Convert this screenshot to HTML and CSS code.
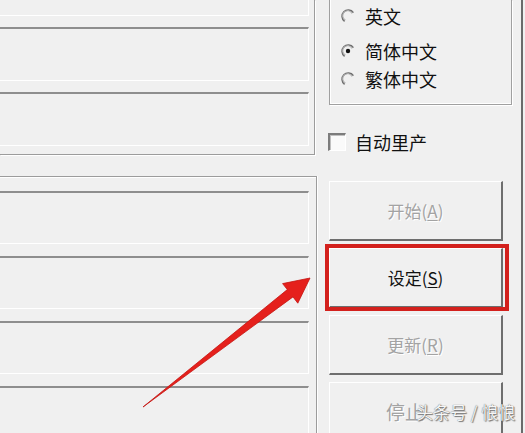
FILE: index.html
```html
<!DOCTYPE html>
<html lang="zh-CN">
<head>
<meta charset="utf-8">
<title>设定</title>
<link rel="stylesheet" href="styles.css">
</head>
<body>
<div class="screen">
  <div class="left">
    <div class="panel panel-top">
      <div class="edit edit-first"></div>
      <div class="edit"></div>
      <div class="edit"></div>
    </div>
    <div class="panel panel-bottom">
      <div class="edit"></div>
      <div class="edit"></div>
      <div class="edit"></div>
      <div class="edit"></div>
    </div>
  </div>
  <div class="right">
    <div class="group">
      <div class="radio r1">
        <svg class="radio-icon" viewBox="0 0 14 14" width="14" height="14"><path d="M12.4 3.6 A6.3 6.3 0 1 0 3.6 12.4" fill="none" stroke="#6f6f6f" stroke-width="1.5"/><path d="M11 4.4 A4.9 4.9 0 1 0 4.4 11" fill="none" stroke="#b4b4b4" stroke-width="1.1"/></svg>
        <span>英文</span>
      </div>
      <div class="radio">
        <svg class="radio-icon" viewBox="0 0 14 14" width="14" height="14"><path d="M12.4 3.6 A6.3 6.3 0 1 0 3.6 12.4" fill="none" stroke="#6f6f6f" stroke-width="1.5"/><path d="M11 4.4 A4.9 4.9 0 1 0 4.4 11" fill="none" stroke="#b4b4b4" stroke-width="1.1"/><circle cx="7" cy="7" r="2.2" fill="#111"/></svg>
        <span>简体中文</span>
      </div>
      <div class="radio">
        <svg class="radio-icon" viewBox="0 0 14 14" width="14" height="14"><path d="M12.4 3.6 A6.3 6.3 0 1 0 3.6 12.4" fill="none" stroke="#6f6f6f" stroke-width="1.5"/><path d="M11 4.4 A4.9 4.9 0 1 0 4.4 11" fill="none" stroke="#b4b4b4" stroke-width="1.1"/></svg>
        <span>繁体中文</span>
      </div>
    </div>
    <div class="check">
      <span class="box"></span>
      <span>自动里产</span>
    </div>
    <div class="buttons">
      <div class="btn disabled">开始(<u>A</u>)</div>
      <div class="btn highlight">设定(<u>S</u>)</div>
      <div class="btn disabled">更新(<u>R</u>)</div>
      <div class="btn disabled stop">停止</div>
    </div>
  </div>
  <svg class="arrow" viewBox="0 0 525 433" width="525" height="433">
    <polygon points="143,407 287.3,289.6 282.6,283.6 310,278 297.8,303.2 293,296.9" fill="#e5201c" stroke="#c41512" stroke-width="0.8" stroke-linejoin="round"/>
  </svg>
  <div class="watermark">头条号 / 悢悢</div>
</div>
</body>
</html>
```
FILE: styles.css
```css
html, body {
  margin: 0;
  padding: 0;
  background: #f0f0f0;
}

body {
  font-family: "Noto Sans CJK SC", "DejaVu Sans", sans-serif;
  color: #111;
}

.screen {
  position: relative;
  width: 525px;
  height: 433px;
  overflow: hidden;
  display: flex;
  background: #f0f0f0;
}

.left {
  width: 317px;
  flex: none;
  display: flex;
  flex-direction: column;
}

.panel {
  display: flex;
  flex-direction: column;
  box-sizing: border-box;
  overflow: hidden;
}

.panel-top {
  width: 315px;
  height: 155px;
  gap: 11px;
  padding-right: 5px;
  border-right: 1px solid #9c9c9c;
  border-bottom: 1px solid #9c9c9c;
  box-shadow: 1px 1px 0 #ffffff;
}

.panel-bottom {
  width: 317px;
  flex: 1;
  margin-top: 21px;
  padding-top: 14px;
  padding-right: 7px;
  gap: 12px;
  border-top: 1px solid #9c9c9c;
  border-right: 1px solid #9c9c9c;
  box-shadow: inset 0 1px 0 #ffffff, 1px 0 0 #ffffff;
}

.edit {
  flex: none;
  height: 54px;
  box-sizing: border-box;
  margin-left: -4px;
  border-top: 2px solid #8e8e8e;
  border-left: 1px solid #8e8e8e;
  border-bottom: 1px solid #ffffff;
  border-right: 1px solid #ffffff;
  background: #f0f0f0;
}

.panel-bottom .edit {
  height: 53px;
}

.edit-first {
  margin-top: -38px;
}

.right {
  width: 206px;
  flex: none;
  box-sizing: border-box;
  padding-left: 12px;
  border-right: 2px solid #6a6a6a;
  display: flex;
  flex-direction: column;
}

.group {
  width: 183px;
  box-sizing: border-box;
  padding-top: 2px;
  padding-bottom: 11px;
  border-left: 1px solid #a0a0a0;
  border-right: 1px solid #a0a0a0;
  border-bottom: 1px solid #a0a0a0;
  box-shadow: inset 1px 0 0 #ffffff, inset 0 -1px 0 #ffffff, 1px 1px 0 #ffffff;
  display: flex;
  flex-direction: column;
}

.radio {
  height: 28px;
  display: flex;
  align-items: center;
  padding-left: 11px;
  font-size: 18px;
  line-height: 18px;
}

.radio.r1 {
  margin-bottom: 7px;
}

.radio-icon {
  flex: none;
  margin-right: 10px;
}

.check {
  margin-top: 28px;
  margin-left: -1px;
  height: 19px;
  display: flex;
  align-items: center;
  gap: 9px;
  font-size: 18px;
  line-height: 18px;
}

.box {
  width: 18px;
  height: 18px;
  box-sizing: border-box;
  background: #fafafa;
  border-top: 2px solid #7c7c7c;
  border-left: 2px solid #7c7c7c;
  border-bottom: 1px solid #ffffff;
  border-right: 1px solid #ffffff;
  box-shadow: inset 1px 1px 0 #c0c0c0;
}

.buttons {
  margin-top: 30px;
  display: flex;
  flex-direction: column;
  gap: 7px;
}

.btn {
  position: relative;
  width: 174px;
  height: 60px;
  box-sizing: border-box;
  display: flex;
  align-items: center;
  justify-content: center;
  font-size: 17px;
  line-height: 17px;
  border-top: 1px solid #ffffff;
  border-left: 1px solid #ffffff;
  border-right: 2px solid #6e6e6e;
  border-bottom: 2px solid #6e6e6e;
  background: #f0f0f0;
}

.btn u {
  text-underline-offset: 2px;
}

.btn.disabled {
  color: #a3a3a3;
  text-shadow: 1px 1px 0 #ffffff;
}

.btn.stop {
  justify-content: flex-start;
  padding-left: 56px;
  font-size: 19px;
}

.btn.highlight::after {
  content: "";
  position: absolute;
  top: -5px;
  left: -5px;
  right: -8px;
  bottom: -5px;
  border: 4px solid #d3211d;
}

.arrow {
  position: absolute;
  left: 0;
  top: 0;
  pointer-events: none;
}

.watermark {
  position: absolute;
  left: 416px;
  top: 401px;
  font-size: 17px;
  line-height: 22px;
  color: #f6f6f6;
  text-shadow: 0 0 1px #4a4a4a, 1px 1px 1px #7a7a7a;
  white-space: nowrap;
}
```
